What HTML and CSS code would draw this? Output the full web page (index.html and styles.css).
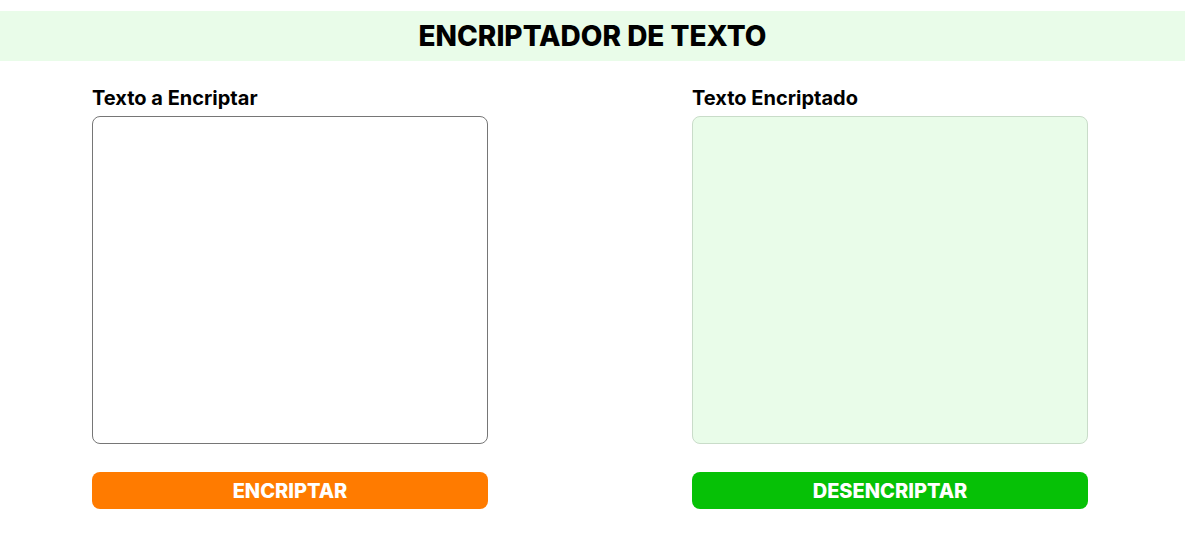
FILE: index.html
```html
<!DOCTYPE html>
<html lang="es">
<head>
<meta charset="utf-8">
<title>Encriptador de texto</title>
<link rel="stylesheet" href="styles.css">
</head>
<body>
<header class="header">
  <h1 class="title">ENCRIPTADOR DE TEXTO</h1>
</header>
<main class="panels">
  <section class="panel">
    <label class="label" for="entrada">Texto a Encriptar</label>
    <textarea id="entrada" class="box box-input"></textarea>
    <button class="btn btn-encrypt">ENCRIPTAR</button>
  </section>
  <section class="panel">
    <label class="label" for="salida">Texto Encriptado</label>
    <textarea id="salida" class="box box-output" readonly></textarea>
    <button class="btn btn-decrypt">DESENCRIPTAR</button>
  </section>
</main>
</body>
</html>
```
FILE: styles.css
```css
* { box-sizing: border-box; }
body {
  margin: 0;
  font-family: Inter, "Noto Sans", sans-serif;
  background: #ffffff;
  color: #000;
}
.header {
  margin-top: 11px;
  height: 50px;
  background: #e9fce9;
  display: flex;
  align-items: center;
  justify-content: center;
}
.title {
  margin: 0;
  font-size: 28px;
  font-weight: 800;
  letter-spacing: 0;
}
.panels {
  display: flex;
  gap: 204px;
  padding-left: 92px;
  padding-top: 25px;
}
.panel {
  width: 396px;
  display: flex;
  flex-direction: column;
}
.label {
  font-size: 20px;
  font-weight: 700;
  line-height: 24px;
  height: 24px;
  margin-bottom: 6px;
}
.box {
  width: 396px;
  height: 328px;
  border-radius: 8px;
  resize: none;
  font-family: inherit;
  font-size: 16px;
  padding: 8px;
  outline: none;
}
.box-input {
  border: 1px solid #767676;
  background: #fff;
}
.box-output {
  border: 1px solid #c9dcc9;
  background: #e9fce9;
}
.btn {
  margin-top: 28px;
  height: 37px;
  border: none;
  border-radius: 8px;
  color: #fff;
  font-family: inherit;
  font-size: 20px;
  font-weight: 800;
  cursor: pointer;
}
.btn-encrypt { background: #ff7b00; }
.btn-decrypt { background: #06c106; }
```
